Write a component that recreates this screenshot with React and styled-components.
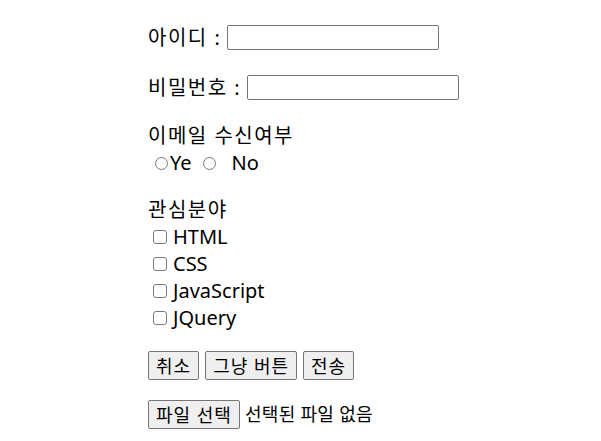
import styled, { createGlobalStyle } from "styled-components";

const Global = createGlobalStyle`
  body {
    margin: 8px;
    background: #fff;
    color: #000;
    font-family: "Noto Sans", "Noto Sans CJK KR", sans-serif;
  }
`;

const Form = styled.form`
  margin-left: 140px;
  font-size: 20px;
  line-height: 27px;
`;

const Row = styled.p`
  margin: ${({ first }) => (first ? "14px 0 20px" : "20px 0")};
  display: flex;
  align-items: center;
  min-height: 30px;
`;

const Ko = styled.span`
  letter-spacing: 1.5px;
  white-space: pre;
`;

const Block = styled.div`
  margin: 20px 0;
`;

const Line = styled.div`
  display: flex;
  align-items: center;
  height: 27px;
`;

const Option = styled.label`
  display: flex;
  align-items: center;
  margin-right: ${({ right }) => right || 0}px;

  input {
    position: absolute;
    opacity: 0;
    width: 0;
    height: 0;
  }
`;

const TextInput = styled.input`
  width: 212px;
  height: 25px;
  box-sizing: border-box;
  border: 1px solid #767676;
  border-radius: 2px;
  margin-left: ${({ gap }) => gap}px;
  padding: 1px 2px;
`;

const RadioMark = styled.span`
  display: block;
  flex: none;
  box-sizing: border-box;
  width: 13px;
  height: 13px;
  border: 1px solid #7a7a7a;
  border-radius: 50%;
  background: #fff;
  margin: 2px ${({ right }) => right}px 0 ${({ left }) => left}px;
`;

const CheckMark = styled.span`
  display: block;
  flex: none;
  box-sizing: border-box;
  width: 14px;
  height: 14px;
  border: 1px solid #7a7a7a;
  border-radius: 3px;
  background: #fff;
  margin: 0 6px 0 5px;
`;

const Buttons = styled.div`
  display: flex;
  align-items: center;
  gap: 6px;
  margin: 20px 0;
`;

const Button = styled.button`
  font-family: inherit;
  font-size: 18px;
  letter-spacing: 1px;
  line-height: 24px;
  height: 29px;
  padding: 1px 7px;
  background: #efefef;
  color: #000;
  border: 1px solid #767676;
  border-radius: 2px;
`;

const FileRow = styled.div`
  display: flex;
  align-items: center;
  gap: 5px;
  margin: 20px 0;
  font-size: 18px;
`;

const FileName = styled.span`
  letter-spacing: 0.3px;
`;

const interests = ["HTML", "CSS", "JavaScript", "JQuery"];

export default function App() {
  return (
    <>
      <Global />
      <Form onSubmit={(e) => e.preventDefault()}>
        <Row first>
          <Ko>아이디 :</Ko>
          <TextInput type="text" gap={6} />
        </Row>
        <Row>
          <Ko>비밀번호 :</Ko>
          <TextInput type="password" gap={6} />
        </Row>
        <Block>
          <Ko>이메일 수신여부</Ko>
          <Line>
            <Option>
              <input type="radio" name="mail" />
              <RadioMark left={7} right={2} />
              Ye
            </Option>
            <Option>
              <input type="radio" name="mail" />
              <RadioMark left={11} right={16} />
              No
            </Option>
          </Line>
        </Block>
        <Block>
          <Ko>관심분야</Ko>
          {interests.map((name) => (
            <Line key={name}>
              <Option>
                <input type="checkbox" />
                <CheckMark />
                {name}
              </Option>
            </Line>
          ))}
        </Block>
        <Buttons>
          <Button type="reset">취소</Button>
          <Button type="button">그냥 버튼</Button>
          <Button type="submit">전송</Button>
        </Buttons>
        <FileRow>
          <Button type="button">파일 선택</Button>
          <FileName>선택된 파일 없음</FileName>
        </FileRow>
      </Form>
    </>
  );
}
